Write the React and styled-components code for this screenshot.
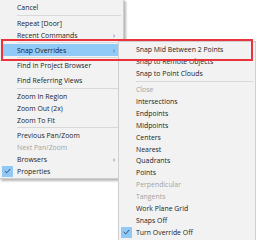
import React from 'react';
import styled, { createGlobalStyle } from 'styled-components';

const GlobalStyle = createGlobalStyle`
  html, body {
    margin: 0;
    padding: 0;
    background: #ffffff;
  }
  body {
    font-family: "Open Sans", "Noto Sans", "Liberation Sans", sans-serif;
  }
`;

const Stage = styled.div`
  position: relative;
  width: 256px;
  height: 240px;
  overflow: hidden;
  background: #ffffff;
`;

// menus are windows floating over the desktop, so they're placed absolutely
const Menu = styled.div`
  position: absolute;
  left: ${({ $left }) => $left}px;
  top: ${({ $top }) => $top}px;
  width: ${({ $width }) => $width}px;
  background: #f2f2f2;
  border: 1px solid #cfcfcf;
  box-shadow: 2px 2px 2px rgba(0, 0, 0, 0.28);
  padding: ${({ $pad }) => $pad || '2px 0'};
  display: flex;
  flex-direction: column;
`;

const Item = styled.div`
  display: flex;
  align-items: center;
  height: ${({ $h }) => $h || 12}px;
  margin: 0 2px;
  background: ${({ $active }) => ($active ? '#91c9f7' : 'transparent')};
  color: ${({ $disabled }) => ($disabled ? '#a3a3a3' : '#1b1b1b')};
  font-size: 6.9px;
  white-space: nowrap;
`;

const Gutter = styled.div`
  width: 15px;
  height: 100%;
  display: flex;
  align-items: center;
  flex-shrink: 0;
`;

const CheckBox = styled.div`
  width: 11px;
  height: 11px;
  background: #90c8f6;
  display: flex;
  align-items: center;
  justify-content: center;
`;

const Label = styled.span`
  flex: 1;
`;

const Arrow = styled.span`
  width: 8px;
  font-size: 7px;
  color: #555;
`;

const Separator = styled.div`
  height: 1px;
  background: ${({ $hidden }) => ($hidden ? 'transparent' : '#d8d8d8')};
  margin: ${({ $space }) => `${$space ?? 1}px 2px ${$space ?? 1}px 17px`};
`;

const Highlight = styled.div`
  position: absolute;
  left: 1px;
  top: 39px;
  width: 248px;
  height: 18px;
  border: 2px solid #e8323c;
  pointer-events: none;
`;

const Check = () => (
  <svg width="7" height="6" viewBox="0 0 7 6">
    <path d="M0.8 3.1 L2.7 4.9 L6.2 1" fill="none" stroke="#2b3f55" strokeWidth="0.9" />
  </svg>
);

const MenuItem = ({ label, disabled, active, sub, checked, h }) => (
  <Item $disabled={disabled} $active={active} $h={h}>
    <Gutter>
      {checked && (
        <CheckBox>
          <Check />
        </CheckBox>
      )}
    </Gutter>
    <Label>{label}</Label>
    {sub && <Arrow>›</Arrow>}
  </Item>
);

const snapItems = [
  'Close',
  'Intersections',
  'Endpoints',
  'Midpoints',
  'Centers',
  'Nearest',
  'Quadrants',
  'Points',
  'Perpendicular',
  'Tangents',
  'Work Plane Grid',
  'Snaps Off',
];

const disabledSnaps = ['Close', 'Perpendicular', 'Tangents'];

export default function App() {
  return (
    <Stage>
      <GlobalStyle />
      <Menu $left={-1} $top={-1} $width={123} $pad="1px 0 1px">
        <MenuItem label="Cancel" />
        <Separator $space={1.5} />
        <MenuItem label="Repeat [Door]" />
        <MenuItem label="Recent Commands" sub />
        <Separator />
        <MenuItem label="Snap Overrides" sub active />
        <Separator />
        <MenuItem label="Find in Project Browser" />
        <Separator $hidden />
        <MenuItem label="Find Referring Views" />
        <Separator $space={1.5} />
        <MenuItem label="Zoom In Region" />
        <MenuItem label="Zoom Out (2x)" />
        <MenuItem label="Zoom To Fit" />
        <Separator />
        <MenuItem label="Previous Pan/Zoom" />
        <MenuItem label="Next Pan/Zoom" disabled />
        <MenuItem label="Browsers" sub />
        <MenuItem label="Properties" checked />
      </Menu>

      <Menu $left={118} $top={41} $width={136}>
        <MenuItem label="Snap Mid Between 2 Points" h={11.9} />
        <MenuItem label="Snap to Remote Objects" h={11.9} />
        <MenuItem label="Snap to Point Clouds" h={11.9} />
        <Separator $space={1.5} />
        {snapItems.map((s) => (
          <MenuItem key={s} label={s} h={11.9} disabled={disabledSnaps.includes(s)} />
        ))}
        <MenuItem label="Turn Override Off" h={11.9} checked />
      </Menu>

      <Highlight />
    </Stage>
  );
}
